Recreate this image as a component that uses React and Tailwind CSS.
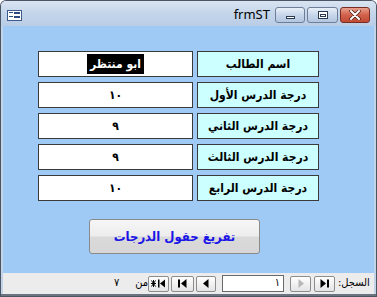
import React from "react";

const ar = { fontFamily: '"DejaVu Sans Condensed", "DejaVu Sans", sans-serif' };

function Row({ label, value, selected }) {
  return (
    <div className="flex gap-[4px] ml-[35px]">
      <div className="w-[155px] h-[26px] bg-white border border-[#3a3a3a] flex items-center justify-center">
        {selected ? (
          <span dir="rtl" className="bg-black text-white font-bold text-[12px] leading-[20px] px-[3px] whitespace-nowrap" style={ar}>
            {value}
          </span>
        ) : (
          <span dir="rtl" className="text-black font-bold text-[12px]" style={ar}>
            {value}
          </span>
        )}
      </div>
      <div className="w-[122px] h-[26px] bg-[#ccffff] border border-[#3a3a3a] flex items-center justify-center">
        <span dir="rtl" className="text-black font-bold text-[12px] whitespace-nowrap" style={ar}>
          {label}
        </span>
      </div>
    </div>
  );
}

function NavBtn({ w, children }) {
  return (
    <div
      className="h-[16px] rounded-[2px] border border-[#8d8d8d] bg-[linear-gradient(#ffffff,#e4e4e4)] flex items-center justify-center"
      style={{ width: w }}
    >
      {children}
    </div>
  );
}

export default function App() {
  return (
    <div className="w-[377px] h-[297px] bg-[#4a5566] p-[1px] rounded-t-[6px]">
      <div className="w-full h-full flex flex-col bg-[#c3d3e8] rounded-t-[5px]">
        {/* title bar */}
        <div className="h-[25px] flex items-center bg-[linear-gradient(#dae4f1,#c4d5ea_50%,#b9cde6)] rounded-t-[5px] relative">
          <div className="ml-[6px] mt-[3px] w-[15px] h-[11px] bg-white border border-[#3c5a8c] flex flex-col justify-center gap-[2px] px-[1px]">
            <div className="flex gap-[1px]"><div className="w-[4px] h-[1px] bg-[#2a4a80]" /><div className="w-[6px] h-[2px] border border-[#2a4a80]" /></div>
            <div className="flex gap-[1px]"><div className="w-[4px] h-[1px] bg-[#2a4a80]" /><div className="w-[6px] h-[2px] border border-[#2a4a80]" /></div>
          </div>
          <div className="flex-1" />
          <span className="text-[13px] text-black mr-[5px] mt-[3px]" style={{ fontFamily: '"Noto Sans", sans-serif' }}>frmST</span>
          <div className="flex gap-[2px] mr-[6px] mt-[3px]">
            <div className="w-[30px] h-[16px] rounded-[3px] border border-[#6f7f98] bg-[linear-gradient(#e8eff8,#c7d6ea_50%,#b3c6e0)] flex items-center justify-center">
              <div className="w-[9px] h-[3px] bg-white border border-[#2b3a52] mt-[5px]" />
            </div>
            <div className="w-[31px] h-[16px] rounded-[3px] border border-[#6f7f98] bg-[linear-gradient(#e8eff8,#c7d6ea_50%,#b3c6e0)] flex items-center justify-center">
              <div className="w-[10px] h-[8px] bg-white border border-[#2b3a52] flex items-center justify-center">
                <div className="w-[6px] h-[3px] border border-[#2b3a52]" />
              </div>
            </div>
            <div className="w-[30px] h-[16px] rounded-[3px] border border-[#7a2b22] bg-[linear-gradient(#e8a08e,#d1614b_50%,#c24a35)] flex items-center justify-center">
              <svg width="12" height="10" viewBox="0 0 12 10">
                <path d="M2 1 L10 9 M10 1 L2 9" stroke="#4a1a14" strokeWidth="3.4" strokeLinecap="round" />
                <path d="M2 1 L10 9 M10 1 L2 9" stroke="#ffffff" strokeWidth="2" strokeLinecap="round" />
              </svg>
            </div>
          </div>
        </div>

        {/* body */}
        <div className="flex-1 mx-[2px] bg-[#9ecaf5] flex flex-col pt-[25px]">
          <div className="flex flex-col gap-[5px]">
            <Row label="اسم الطالب" value="ابو منتظر" selected />
            <Row label="درجة الدرس الأول" value="١٠" />
            <Row label="درجة الدرس الثاني" value="٩" />
            <Row label="درجة الدرس الثالث" value="٩" />
            <Row label="درجة الدرس الرابع" value="١٠" />
          </div>
          <div className="mt-[18px] ml-[86px] w-[171px] h-[35px] rounded-[3px] border border-[#8a8a8a] bg-[linear-gradient(#f6f6f6,#ededed_48%,#dadada_52%,#d6d6d6)] flex items-center justify-center">
            <span dir="rtl" className="text-[#1a14e6] font-bold text-[13px] whitespace-nowrap" style={ar}>تفريغ حقول الدرجات</span>
          </div>
        </div>

        {/* nav bar */}
        <div className="h-[21px] mx-[2px] bg-[#ececec] flex items-center">
          <span className="ml-[111px] w-[8px] text-[11px] text-black" style={ar}>٧</span>
          <span dir="rtl" className="ml-[15px] w-[11px] text-[11px] text-black whitespace-nowrap" style={ar}>من</span>
          <div className="flex items-center gap-[2px]">
            <NavBtn w={21}>
              <svg width="15" height="9" viewBox="0 0 15 9">
                <path d="M0 4.5 H5 M2.5 1 V8 M0.5 1.5 L4.5 7.5 M4.5 1.5 L0.5 7.5" stroke="#000" strokeWidth="1" />
                <rect x="7" y="0.5" width="1.5" height="8" fill="#000" />
                <path d="M9 4.5 L14 0.5 V8.5 Z" fill="#000" />
              </svg>
            </NavBtn>
            <NavBtn w={23}>
              <svg width="9" height="9" viewBox="0 0 9 9">
                <rect x="0" y="0.5" width="2" height="8" fill="#000" />
                <path d="M3 4.5 L8.5 0 V9 Z" fill="#000" />
              </svg>
            </NavBtn>
            <NavBtn w={20}>
              <svg width="6" height="9" viewBox="0 0 6 9">
                <path d="M0 4.5 L5.5 0 V9 Z" fill="#000" />
              </svg>
            </NavBtn>
          </div>
          <div className="ml-[6px] w-[62px] h-[17px] bg-white border border-[#6a6a6a] flex items-center justify-end pr-[3px]">
            <span className="text-[11px] text-black" style={ar}>١</span>
          </div>
          <div className="ml-[6px] flex items-center gap-[3px]">
            <NavBtn w={21}>
              <svg width="6" height="9" viewBox="0 0 6 9">
                <path d="M6 4.5 L0.5 0 V9 Z" fill="#b8b8b8" />
              </svg>
            </NavBtn>
            <NavBtn w={21}>
              <svg width="9" height="9" viewBox="0 0 9 9">
                <path d="M6 4.5 L0.5 0 V9 Z" fill="#000" />
                <rect x="7" y="0.5" width="2" height="8" fill="#000" />
              </svg>
            </NavBtn>
          </div>
          <span dir="rtl" className="ml-[3px] text-[11px] text-black whitespace-nowrap" style={ar}>السجل:</span>
        </div>
        <div className="h-[2px] bg-[#6b7380]" />
      </div>
    </div>
  );
}
